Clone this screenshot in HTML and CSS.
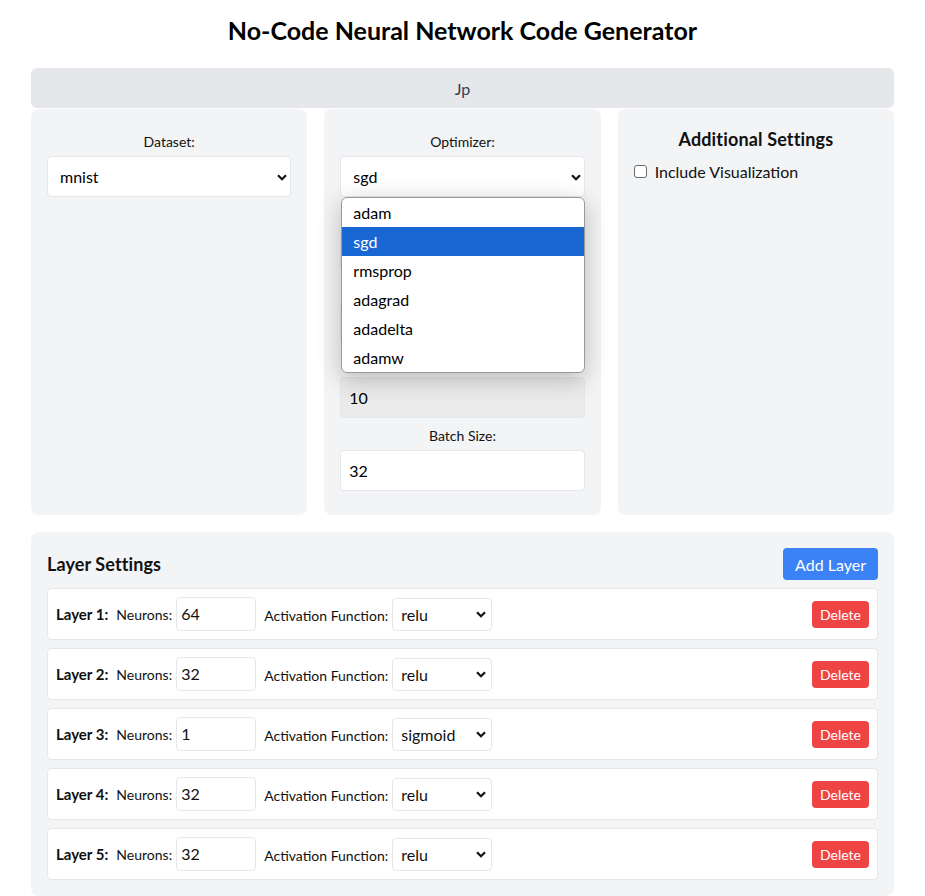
FILE: index.html
```html
<!DOCTYPE html>
<html lang="en">
<head>
<meta charset="utf-8">
<title>No-Code Neural Network Code Generator</title>
<link rel="stylesheet" href="styles.css">
</head>
<body>
<div class="page">
  <h1 class="title">No-Code Neural Network Code Generator</h1>
  <div class="topbar">Jp</div>

  <div class="cards">
    <div class="card">
      <div class="field">
        <label class="label">Dataset:</label>
        <div class="select-wrap">
          <div class="select">mnist</div>
          <svg class="chev" width="10" height="7" viewBox="0 0 10 7"><path d="M1 1.2 L5 5.2 L9 1.2" fill="none" stroke="#111" stroke-width="2.2"/></svg>
        </div>
      </div>
    </div>

    <div class="card">
      <div class="field">
        <label class="label">Optimizer:</label>
        <div class="select-wrap">
          <div class="select">sgd</div>
          <svg class="chev" width="10" height="7" viewBox="0 0 10 7"><path d="M1 1.2 L5 5.2 L9 1.2" fill="none" stroke="#111" stroke-width="2.2"/></svg>
          <div class="dropdown">
            <div class="opt">adam</div>
            <div class="opt sel">sgd</div>
            <div class="opt">rmsprop</div>
            <div class="opt">adagrad</div>
            <div class="opt">adadelta</div>
            <div class="opt">adamw</div>
          </div>
        </div>
      </div>
      <div class="field">
        <div class="label blank"></div>
        <div class="input"></div>
      </div>
      <div class="field">
        <div class="label blank"></div>
        <div class="input"></div>
      </div>
      <div class="field">
        <div class="label blank"></div>
        <div class="input shaded">10</div>
      </div>
      <div class="field last">
        <label class="label">Batch Size:</label>
        <div class="input">32</div>
      </div>
    </div>

    <div class="card card-add">
      <h3 class="card-title">Additional Settings</h3>
      <label class="check-row"><span class="checkbox"></span>Include Visualization</label>
    </div>
  </div>

  <div class="layers">
    <div class="layers-head">
      <h2 class="layers-title">Layer Settings</h2>
      <button class="btn-add">Add Layer</button>
    </div>

    <div class="layer">
      <strong class="layer-name">Layer 1:</strong>
      <span class="small-label">Neurons:</span>
      <div class="num">64</div>
      <span class="small-label act">Activation Function:</span>
      <div class="mini-select">relu<svg class="chev" width="10" height="7" viewBox="0 0 10 7"><path d="M1 1.2 L5 5.2 L9 1.2" fill="none" stroke="#111" stroke-width="2.2"/></svg></div>
      <button class="btn-del">Delete</button>
    </div>
    <div class="layer">
      <strong class="layer-name">Layer 2:</strong>
      <span class="small-label">Neurons:</span>
      <div class="num">32</div>
      <span class="small-label act">Activation Function:</span>
      <div class="mini-select">relu<svg class="chev" width="10" height="7" viewBox="0 0 10 7"><path d="M1 1.2 L5 5.2 L9 1.2" fill="none" stroke="#111" stroke-width="2.2"/></svg></div>
      <button class="btn-del">Delete</button>
    </div>
    <div class="layer">
      <strong class="layer-name">Layer 3:</strong>
      <span class="small-label">Neurons:</span>
      <div class="num">1</div>
      <span class="small-label act">Activation Function:</span>
      <div class="mini-select">sigmoid<svg class="chev" width="10" height="7" viewBox="0 0 10 7"><path d="M1 1.2 L5 5.2 L9 1.2" fill="none" stroke="#111" stroke-width="2.2"/></svg></div>
      <button class="btn-del">Delete</button>
    </div>
    <div class="layer">
      <strong class="layer-name">Layer 4:</strong>
      <span class="small-label">Neurons:</span>
      <div class="num">32</div>
      <span class="small-label act">Activation Function:</span>
      <div class="mini-select">relu<svg class="chev" width="10" height="7" viewBox="0 0 10 7"><path d="M1 1.2 L5 5.2 L9 1.2" fill="none" stroke="#111" stroke-width="2.2"/></svg></div>
      <button class="btn-del">Delete</button>
    </div>
    <div class="layer">
      <strong class="layer-name">Layer 5:</strong>
      <span class="small-label">Neurons:</span>
      <div class="num">32</div>
      <span class="small-label act">Activation Function:</span>
      <div class="mini-select">relu<svg class="chev" width="10" height="7" viewBox="0 0 10 7"><path d="M1 1.2 L5 5.2 L9 1.2" fill="none" stroke="#111" stroke-width="2.2"/></svg></div>
      <button class="btn-del">Delete</button>
    </div>
  </div>
</div>
</body>
</html>
```

FILE: styles.css
```css
* { box-sizing: border-box; }
html, body { margin: 0; padding: 0; background: #fff; }
body {
  font-family: Lato, "Noto Sans", "Liberation Sans", sans-serif;
  color: #111;
}
.page {
  padding: 14px 31px 40px;
}
.title {
  margin: 0 0 22px;
  font-size: 25px;
  line-height: 32px;
  font-weight: 700;
  text-align: center;
  color: #000;
}
.topbar {
  height: 40px;
  background: #e5e7eb;
  border-radius: 6px;
  display: flex;
  align-items: center;
  justify-content: center;
  font-size: 16px;
  color: #374151;
}
.cards {
  margin-top: 1px;
  display: grid;
  grid-template-columns: 1fr 1fr 1fr;
  gap: 17px;
}
.card {
  background: #f3f4f6;
  border-radius: 8px;
  padding: 23px 16px 24px;
}
.field { margin-bottom: 8.5px; }
.field.last { margin-bottom: 0; }
.label {
  display: block;
  text-align: center;
  font-size: 14px;
  line-height: 20px;
  margin-bottom: 4px;
  color: #111;
}
.label.blank { height: 20px; }
.select-wrap { position: relative; }
.select, .input {
  height: 41px;
  background: #fff;
  border: 1px solid #e5e7eb;
  border-radius: 4px;
  display: flex;
  align-items: center;
  font-size: 16px;
  color: #000;
}
.select { padding: 0 12px; }
.input { padding: 0 8px; }
.input.shaded { background: #ebebec; }
.chev {
  position: absolute;
  right: 4px;
  top: 50%;
  margin-top: -3px;
}
.dropdown {
  position: absolute;
  left: 1px;
  right: 0;
  top: 41px;
  background: #fff;
  border: 1px solid #9a9a9a;
  border-radius: 6px;
  box-shadow: 0 6px 24px rgba(0, 0, 0, 0.24);
  overflow: hidden;
  z-index: 5;
}
.opt {
  height: 29px;
  line-height: 29px;
  padding: 0 11px;
  font-size: 16px;
  color: #000;
}
.opt.sel { background: #1967d2; color: #fff; }

.card-add { padding-top: 16px; }
.card-title {
  margin: 0 0 6px;
  font-size: 18px;
  line-height: 28px;
  font-weight: 700;
  text-align: center;
  letter-spacing: 0.15px;
}
.check-row {
  display: flex;
  align-items: center;
  height: 24px;
  font-size: 16px;
  color: #111;
}
.checkbox {
  width: 13px;
  height: 13px;
  border: 1px solid #6b6b6b;
  border-radius: 3px;
  background: #fff;
  margin: 0 8px 0 0;
}

.layers {
  margin-top: 17px;
  background: #f3f4f6;
  border-radius: 8px;
  padding: 16px;
}
.layers-head {
  display: flex;
  align-items: center;
  justify-content: space-between;
  margin-bottom: 8px;
}
.layers-title {
  margin: 0;
  font-size: 18px;
  line-height: 28px;
  font-weight: 700;
  letter-spacing: 0.1px;
}
.btn-add {
  height: 32px;
  padding: 0 12px;
  border: 0;
  border-radius: 4px;
  background: #3b82f6;
  color: #fff;
  font-family: inherit;
  font-size: 16px;
}
.layer {
  display: flex;
  align-items: center;
  background: #fff;
  border: 1px solid #e5e7eb;
  border-radius: 4px;
  padding: 8px;
  margin-bottom: 8px;
}
.layer:last-child { margin-bottom: 0; }
.layer-name {
  font-size: 15px;
  font-weight: 700;
  margin-right: 8px;
}
.small-label {
  font-size: 14px;
  margin-right: 4px;
}
.small-label.act { margin-top: 2px; }
.num {
  width: 80px;
  height: 34px;
  border: 1px solid #e5e7eb;
  border-radius: 4px;
  padding: 0 4px;
  display: flex;
  align-items: center;
  font-size: 16px;
  margin-right: 8px;
  padding-bottom: 2px;
}
.mini-select {
  position: relative;
  width: 100px;
  height: 33px;
  border: 1px solid #e5e7eb;
  border-radius: 4px;
  padding: 0 8px;
  display: flex;
  align-items: center;
  font-size: 16px;
}
.mini-select .chev { right: 5px; }
.btn-del {
  margin-left: auto;
  height: 27px;
  padding: 0 8px;
  border: 0;
  border-radius: 4px;
  background: #ef4444;
  color: #fff;
  font-family: inherit;
  font-size: 14px;
}
```
